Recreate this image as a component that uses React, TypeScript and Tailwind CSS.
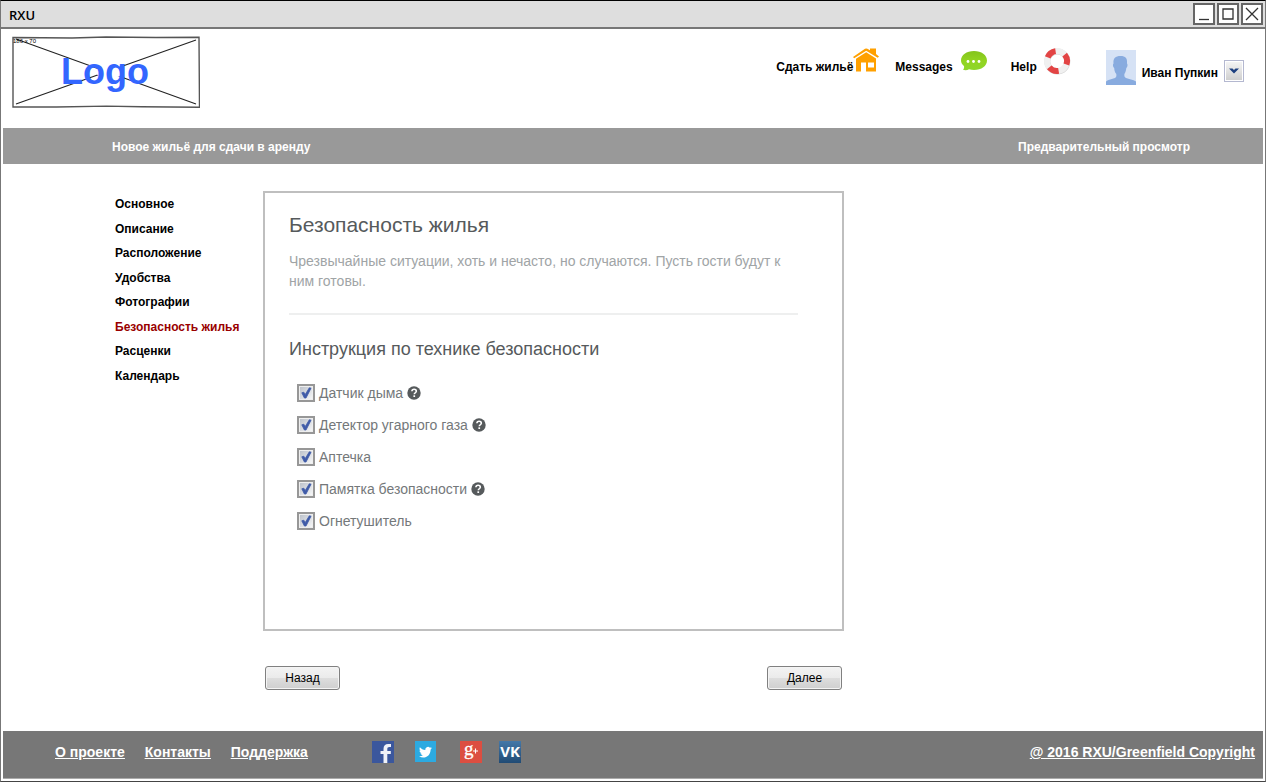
import type { ReactNode } from "react";

const sections = [
  "Основное",
  "Описание",
  "Расположение",
  "Удобства",
  "Фотографии",
  "Безопасность жилья",
  "Расценки",
  "Календарь",
];

const safetyItems = [
  { id: "smoke", label: "Датчик дыма", help: true },
  { id: "gas", label: "Детектор угарного газа", help: true },
  { id: "kit", label: "Аптечка", help: false },
  { id: "memo", label: "Памятка безопасности", help: true },
  { id: "extinguisher", label: "Огнетушитель", help: false },
];

function WindowButton({ label, children }: { label: string; children: ReactNode }) {
  return (
    <button type="button" aria-label={label} className="size-[22px] border-2 border-[#666] bg-white">
      <svg viewBox="0 0 18 18" className="size-full" fill="none" stroke="#333" strokeWidth="1.3">
        {children}
      </svg>
    </button>
  );
}

function TitleBar() {
  return (
    <div className="flex h-7 items-center justify-between border-b-2 border-[#777] bg-[#dedede] pr-0.5 pl-2">
      <span className="pt-0.5 font-['Open_Sans',sans-serif] text-[13px] leading-4 font-semibold">RXU</span>
      <div className="flex gap-0.5">
        <WindowButton label="Свернуть">
          <path d="M4 14.5h10" />
        </WindowButton>
        <WindowButton label="Развернуть">
          <path d="M4 4h10v10H4z" />
        </WindowButton>
        <WindowButton label="Закрыть">
          <path d="M3 3l12 12M15 3L3 15" />
        </WindowButton>
      </div>
    </div>
  );
}

function Logo() {
  return (
    <svg viewBox="0 0 188 72" className="h-[72px] w-[188px]" role="img" aria-label="Logo">
      <path d="M1 1.500L60 2 94 1l50 .5 43-.2.5 70-58-.5-35-.7-50 .9L1 71z" fill="#fff" stroke="#555" strokeWidth="1.400" />
      <path d="M4 3L184 68M184 4L4 68" stroke="#222" strokeWidth="1.100" />
      <ellipse cx="98" cy="36" rx="14" ry="6" fill="#fff" />
      <text x="1" y="7" fontSize="6" fontFamily="Liberation Sans, sans-serif">186 x 70</text>
      <text x="49" y="48" fontSize="36" fontWeight="700" fill="#3366ff" fontFamily="Liberation Sans, sans-serif">Logo</text>
    </svg>
  );
}

function HouseIcon() {
  return (
    <svg viewBox="0 0 26 26" className="size-[26px]" fill="#ffa000">
      <path d="M0 10L12 1.800q1.200-.8 2.400 0L17 3.200V1.500h6v5.600L26 9.500 24.700 10.700 13.200 3.800 1.200 11.300z" />
      <path d="M3 11.800L13.200 5.200 23 11.500V24.500H13v-9H8v9H3z" />
      <path d="M15 15.500h6v5h-6z" fill="#fff" />
    </svg>
  );
}

function BubbleIcon() {
  return (
    <svg viewBox="0 0 26 22" className="h-[22px] w-[26px]">
      <defs>
        <linearGradient id="bubble" x1="0" y1="0" x2="0" y2="1">
          <stop offset="0" stopColor="#84c41c" />
          <stop offset=".5" stopColor="#92d420" />
          <stop offset="1" stopColor="#8ed62c" />
        </linearGradient>
      </defs>
      <path d="M13 2c7.500 0 13 4 13 9.500S20.500 21 13 21c-1.800 0-3.500-.2-5-.8-1.500 1-3.800 1.300-6 .6 1-1 1.300-2.300 1-3.700C1 15.500 0 13.600 0 11.500 0 6 5.500 2 13 2z" fill="url(#bubble)" />
      <g fill="#fff">
        <circle cx="7" cy="12.500" r="1.400" />
        <circle cx="12.500" cy="12.500" r="1.400" />
        <circle cx="18" cy="12.500" r="1.400" />
      </g>
    </svg>
  );
}

function LifebuoyIcon() {
  return (
    <svg viewBox="0 0 28 28" className="size-7" fill="none" strokeWidth="6">
      <circle cx="14.300" cy="14.500" r="10" stroke="#d4d4d4" />
      <circle cx="14" cy="14" r="10" stroke="#f0f0f0" />
      <circle cx="14" cy="14" r="10" stroke="#e24444" strokeDasharray="10.472 10.472" transform="rotate(-40 14 14)" />
    </svg>
  );
}

function Avatar() {
  return (
    <svg viewBox="0 0 30 35" className="h-[35px] w-[30px]" role="img" aria-label="Иван Пупкин">
      <path d="M0 0h30v35H0z" fill="#d6e2f5" />
      <path d="M0 35v-3.500c2-2 6-2.500 9-3.500 1.500-.7 1.500-2 1.300-4C8.500 22 8.300 19.500 8.200 18c-1.500-1-1.500-4-.7-4.500C7 8 9.500 6 14.500 6S21.500 8 21 13.500c.8.5.8 3.500-.7 4.500-.1 1.500-.5 4-1.900 6-.2 2 0 3.300 1.600 4 3 1 7 1.500 10 3.500V35z" fill="#88abdf" />
    </svg>
  );
}

function Header() {
  const link = "flex items-start text-[12px] leading-4 font-bold";
  return (
    <header className="flex h-[99px] items-start justify-between pt-[7px] pr-[21px] pl-[11px]">
      <a href="#home">
        <Logo />
      </a>
      <nav className="flex items-start pt-[11px]" aria-label="Главное меню">
        <a href="#rent" className={link}>
          <span className="pt-3">Сдать жильё</span>
          <HouseIcon />
        </a>
        <a href="#messages" className={link + " ml-4"}>
          <span className="pt-3 pr-2">Messages</span>
          <span className="pt-0.5"><BubbleIcon /></span>
        </a>
        <a href="#help" className={link + " ml-6"}>
          <span className="pt-3 pr-1.5">Help</span>
          <LifebuoyIcon />
        </a>
        <div className="ml-[35px] flex items-center gap-1.5 pt-[3px]">
          <Avatar />
          <span className="pt-2.5 text-[12px] leading-4 font-bold">Иван Пупкин</span>
          <button type="button" aria-label="Меню пользователя" className="mt-1.5 h-[22px] w-5 border border-[#b4b8d0] bg-white p-px">
            <svg viewBox="0 0 16 18" className="size-full bg-linear-to-b from-[#f4f4f4] to-[#cfcfcf]">
              <path d="M3 6.500h3.500L8 8l1.500-1.500H13L8 11.500z" fill="#1e4080" />
            </svg>
          </button>
        </div>
      </nav>
    </header>
  );
}

function Checkbox({ id }: { id: string }) {
  return (
    <span className="relative size-[18px]">
      <input
        id={id}
        type="checkbox"
        defaultChecked
        className="peer block size-[18px] appearance-none border-2 border-[#979797] bg-linear-to-br from-[#b8bec8] to-[#fafafa] shadow-[inset_0_0_0_1px_#eee]"
      />
      <svg viewBox="0 0 18 18" className="pointer-events-none absolute inset-0 hidden size-[18px] peer-checked:block">
        <path d="M4.800 8.800l2-.6 1.500 2.200L12.300 3.800l1.700.4L9 14H7.400z" fill="#3f5ba8" stroke="#3f5ba8" strokeWidth=".8" />
      </svg>
    </span>
  );
}

function HelpMark() {
  return (
    <button type="button" aria-label="Подсказка" className="size-[14px]">
      <svg viewBox="0 0 14 14" className="size-full" fill="none">
        <circle cx="7" cy="7" r="6.700" fill="#565a5c" />
        <path d="M4.900 5.300C5 4 6 3.300 7.100 3.300c1.300 0 2.200.8 2.200 1.900 0 1.500-2 1.600-2 3.100" stroke="#fff" strokeWidth="1.600" />
        <path d="M6.400 9.300h1.700V11H6.400z" fill="#fff" />
      </svg>
    </button>
  );
}

function PlainButton({ children }: { children: string }) {
  return (
    <button
      type="button"
      className="h-6 w-[75px] rounded-[3px] border border-[#808080] bg-[linear-gradient(#f3f3f3,#ebebeb_48%,#dddddd_52%,#cfcfcf)] text-[12px] leading-4 shadow-[inset_0_0_0_1px_#f4f4f4]"
    >
      {children}
    </button>
  );
}

function SocialLinks() {
  return (
    <div className="flex items-center gap-[21px]">
      <a href="#facebook" aria-label="Facebook">
        <svg viewBox="0 0 22 22" className="size-[22px]">
          <path d="M0 0h22v22H0z" fill="#3b579d" />
          <path d="M11.500 22v-9H8.500v-3h3V8c0-3.300 1.800-5 4.600-5H19v3h-1.500c-1.700 0-2.200.7-2.200 2v2h3.500v3h-3.500v9z" fill="#f0f2f8" />
        </svg>
      </a>
      <a href="#twitter" aria-label="Twitter">
        <svg viewBox="0 0 22 22" className="size-[22px]">
          <path d="M0 0h21v21H0z" fill="#2caae1" />
          <path d="M17 7c-.5.300-1 .4-1.500.4.600-.3.900-.8 1.100-1.400-.5.300-1.100.5-1.700.7a2.700 2.700 0 0 0-4.600 2.400C8.100 9 6.200 7.900 4.900 6.300c-.7 1.300-.4 2.800.8 3.600-.4 0-.8-.1-1.200-.3 0 1.300.9 2.400 2.100 2.700-.4.100-.8.100-1.200 0 .3 1.100 1.300 1.800 2.500 1.900-1.100.8-2.400 1.200-3.900 1.100C9.500 18.500 15.600 15 15.600 8.400c.6-.4 1-.9 1.400-1.400z" fill="#fff" />
        </svg>
      </a>
      <a href="#google" aria-label="Google Plus" className="pl-0.5">
        <svg viewBox="0 0 22 22" className="size-[22px] overflow-visible">
          <path d="M0 0h22v22H0z" fill="#dc4e41" />
          <text x="4" y="14" fontSize="19" fontWeight="400" fill="#fff" stroke="#fff" strokeWidth=".3" fontFamily="Liberation Serif, serif">g</text>
          <path d="M15.500 7.500v5M13 10h5" stroke="#fff" strokeWidth="1.100" />
        </svg>
      </a>
      <a href="#vk" aria-label="VK" className="-ml-1">
        <svg viewBox="0 0 22 22" className="size-[22px]">
          <defs>
            <linearGradient id="vk" x1="0" y1="0" x2="0" y2="1">
              <stop offset="0" stopColor="#4478a8" />
              <stop offset="1" stopColor="#214b74" />
            </linearGradient>
          </defs>
          <path d="M0 0h22v22H0z" fill="url(#vk)" />
          <text x="11" y="16" textAnchor="middle" fontSize="15" fontWeight="700" fill="#fff" fontFamily="Open Sans, sans-serif">VK</text>
        </svg>
      </a>
    </div>
  );
}

export default function App() {
  return (
    <div className="flex min-h-screen flex-col border border-[#777] border-t-black border-b-[#444] bg-white font-['Liberation_Sans',Arial,sans-serif] text-black">
      <TitleBar />
      <Header />
      <div className="mx-0.5 flex h-9 items-center justify-between bg-[#999] pt-0.5 pr-[73px] pl-[109px] text-[12px] leading-4 font-bold text-white">
        <h1>Новое жильё для сдачи в аренду</h1>
        <a href="#preview">Предварительный просмотр</a>
      </div>
      <main className="flex flex-1 items-start pt-[27px] pb-10 pl-[114px]">
        <nav className="w-[148px] shrink-0 pt-px" aria-label="Разделы">
          <ul className="flex h-[196px] flex-col justify-between text-[12px] leading-6 font-bold">
            {sections.map((name) => (
              <li key={name}>
                <a href="#section" className={name === "Безопасность жилья" ? "text-[#990000]" : ""}>{name}</a>
              </li>
            ))}
          </ul>
        </nav>
        <div className="w-[581px]">
          <section className="min-h-[440px] border-2 border-[#bfbfbf] px-6 pt-[18px] text-[#565a5c]">
            <h2 className="text-[21px] leading-7">Безопасность жилья</h2>
            <p className="pt-3 pr-5 text-[14px] leading-5 text-[#a0a4a6]">
              Чрезвычайные ситуации, хоть и нечасто, но случаются. Пусть гости будут к ним готовы.
            </p>
            <hr className="mt-[22px] mr-5 border-t-2 border-[#eeefef]" />
            <h3 className="mt-5 text-[18px] leading-7">Инструкция по технике безопасности</h3>
            <ul className="mt-[14px] pl-2">
              {safetyItems.map((item) => (
                <li key={item.id} className="flex h-8 items-center gap-1">
                  <Checkbox id={item.id} />
                  <label htmlFor={item.id} className="text-[14px] leading-5 text-[#74787a]">{item.label}</label>
                  {item.help && <HelpMark />}
                </li>
              ))}
            </ul>
          </section>
          <div className="mt-[35px] flex justify-between px-0.5">
            <PlainButton>Назад</PlainButton>
            <PlainButton>Далее</PlainButton>
          </div>
        </div>
      </main>
      <footer className="mx-0.5 mb-0.5 flex h-12 items-center justify-between border-b border-[#aaa] bg-[#777] pr-2 pb-[5px] pl-[52px] text-[14px] leading-5 font-bold text-white">
        <div className="flex items-center">
          <nav className="flex gap-5 underline" aria-label="Нижнее меню">
            <a href="#about">О проекте</a>
            <a href="#contacts">Контакты</a>
            <a href="#support">Поддержка</a>
          </nav>
          <div className="pl-16">
            <SocialLinks />
          </div>
        </div>
        <a href="#copyright" className="underline">@ 2016 RXU/Greenfield Copyright</a>
      </footer>
    </div>
  );
}
